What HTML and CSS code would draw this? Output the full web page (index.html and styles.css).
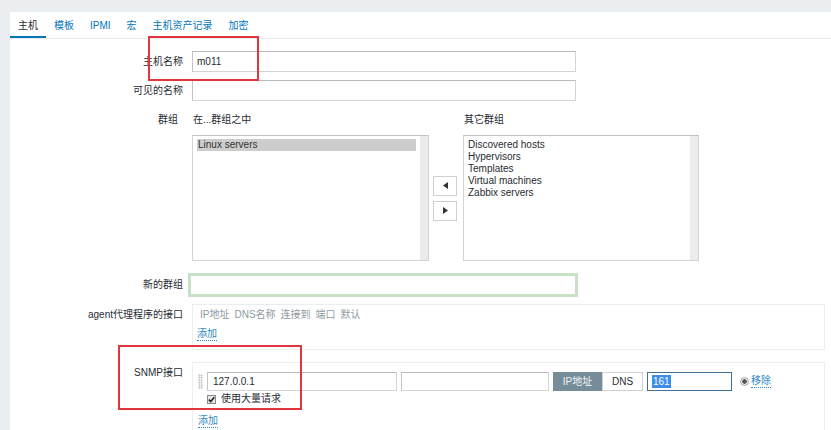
FILE: index.html
```html
<!DOCTYPE html>
<html>
<head>
<title>主机</title>
<meta charset="UTF-8">
<link rel="stylesheet" href="styles.css">
</head>
<body>

<div class="page">
  <div class="panel">
    <ul class="tabs">
      <li class="active"><a href="#">主机</a></li>
      <li><a href="#">模板</a></li>
      <li><a href="#">IPMI</a></li>
      <li><a href="#">宏</a></li>
      <li><a href="#">主机资产记录</a></li>
      <li><a href="#">加密</a></li>
    </ul>

    <div class="form">
      <div class="row row-host">
        <div class="lbl">主机名称</div>
        <div><input class="text wide" type="text" value="m011"></div>
      </div>

      <div class="row row-visible">
        <div class="lbl">可见的名称</div>
        <div><input class="text wide" type="text" value=""></div>
      </div>

      <div class="row row-groups">
        <div class="lbl lbl-groups">群组</div>
        <div class="groups">
          <div class="group-col">
            <div class="group-head">在...群组之中</div>
            <div class="listbox">
              <div class="items">
                <div class="item selected">Linux servers</div>
              </div>
              <div class="track"></div>
            </div>
          </div>
          <div class="moves">
            <button class="move" title="添加"><svg width="5" height="7" viewBox="0 0 5 7"><polygon points="5,0 5,7 0,3.5" fill="#333"/></svg></button>
            <button class="move" title="移除"><svg width="5" height="7" viewBox="0 0 5 7"><polygon points="0,0 0,7 5,3.5" fill="#333"/></svg></button>
          </div>
          <div class="group-col">
            <div class="group-head">其它群组</div>
            <div class="listbox">
              <div class="items">
                <div class="item">Discovered hosts</div>
                <div class="item">Hypervisors</div>
                <div class="item">Templates</div>
                <div class="item">Virtual machines</div>
                <div class="item">Zabbix servers</div>
              </div>
              <div class="track"></div>
            </div>
          </div>
        </div>
      </div>

      <div class="row row-newgroup">
        <div class="lbl">新的群组</div>
        <div><input class="text newgroup" type="text" value=""></div>
      </div>

      <div class="row row-box row-agent">
        <div class="lbl">agent代理程序的接口</div>
        <div class="ifbox agent">
          <div class="if-head">
            <span>IP地址</span><span>DNS名称</span><span>连接到</span><span>端口</span><span>默认</span>
          </div>
          <a class="add" href="#">添加</a>
        </div>
      </div>

      <div class="row row-box row-snmp">
        <div class="lbl">SNMP接口</div>
        <div class="ifbox snmp">
          <div class="if-line">
            <span class="handle"></span>
            <input class="text ip" type="text" value="127.0.0.1">
            <input class="text dns" type="text" value="">
            <div class="seg">
              <span class="seg-btn on">IP地址</span><span class="seg-btn">DNS</span>
            </div>
            <div class="text port"><span class="sel">161</span></div>
            <span class="radio"></span>
            <a class="remove" href="#">移除</a>
          </div>
          <div class="bulk">
            <span class="check"><svg width="7" height="7" viewBox="0 0 7 7"><path d="M0.8 3.6 L2.7 5.6 L6.3 1.2" stroke="#222" stroke-width="1.6" fill="none"/></svg></span>
            <span>使用大量请求</span>
          </div>
          <a class="add" href="#">添加</a>
        </div>
      </div>
    </div>
  </div>
</div>

<div class="mark mark-host"></div>
<div class="mark mark-snmp"></div>

</body>
</html>
```

FILE: styles.css
```css
* {
  box-sizing: border-box;
}
html, body {
  margin: 0;
  height: 100%;
}
body {
  background: #ebeef0;
  font-family: "Liberation Sans", Arial, "Noto Sans CJK SC", sans-serif;
  font-size: 10px;
  color: #1f2c33;
  overflow: hidden;
  position: relative;
}
.page {
  padding: 12px 0 0 10px;
  height: 100%;
}
.panel {
  background: #fff;
  height: 100%;
}

/* tabs */
.tabs {
  display: flex;
  list-style: none;
  margin: 0;
  padding: 0;
  height: 27px;
  border-bottom: 1px solid #ebeef0;
}
.tabs a {
  display: block;
  height: 26px;
  padding: 3px 8px 0;
  line-height: 21px;
  color: #0275b8;
  text-decoration: none;
  border-bottom: 2px solid transparent;
}
.tabs .active a {
  color: #1f2c33;
  border-bottom-color: #0275b8;
}

/* form rows */
.row {
  display: grid;
  grid-template-columns: 173px 1fr;
  column-gap: 9px;
  align-items: center;
}
.lbl {
  text-align: right;
  line-height: 12px;
}
.row-host {
  margin-top: 12px;
}
.row-visible {
  margin-top: 8px;
}
.row-groups {
  margin-top: 11px;
  align-items: start;
}
.row-newgroup {
  margin-top: 12px;
}
.row-agent {
  margin-top: 7px;
}
.row-snmp {
  margin-top: 12px;
}
.row-box {
  align-items: start;
}
.row-box .lbl {
  padding-top: 5px;
}
.lbl-groups {
  line-height: 15px;
  padding-right: 5px;
}

.text {
  display: block;
  height: 21px;
  margin: 0;
  padding: 0 4px;
  font: inherit;
  color: #1f2c33;
  background: #fff;
  border: 1px solid #d4d4d4;
  border-top-color: #b9b9b9;
  border-left-color: #c4c4c4;
  outline: 0;
}
.wide {
  width: 384px;
}
.newgroup {
  width: 390px;
  height: 24px;
  margin-left: -4px;
  border: 3px solid #c8e2c8;
}

/* groups */
.groups {
  display: flex;
}
.group-head {
  line-height: 15px;
  padding-left: 1px;
}
.listbox {
  display: flex;
  width: 237px;
  height: 126px;
  margin-top: 8px;
  border: 1px solid #d4d4d4;
  border-top-color: #c2c2c2;
}
.group-col + .moves + .group-col .listbox {
  width: 236px;
}
.items {
  flex: 1;
  padding: 3px 4px 0;
}
.item {
  line-height: 12px;
  white-space: nowrap;
}
.item.selected {
  background: #cdcdcd;
  color: #333;
  padding-left: 1px;
}
.track {
  width: 8px;
  background: #ececec;
}
.moves {
  display: flex;
  flex-direction: column;
  justify-content: center;
  gap: 5px;
  margin: 23px 6px 0 4px;
}
.move {
  width: 24px;
  height: 20px;
  padding: 0;
  display: flex;
  align-items: center;
  justify-content: center;
  background: #fff;
  border: 1px solid #d0d0d0;
  cursor: pointer;
}

/* interface boxes */
.ifbox {
  margin-right: 6px;
  border: 1px solid #ebeef0;
}
.agent {
  height: 46px;
  padding: 4px 4px 0;
}
.if-head {
  display: flex;
  gap: 5px;
  padding-left: 3px;
  line-height: 12px;
  color: #8d9aa2;
}
.add {
  display: inline-block;
  line-height: 12px;
  color: #2e88c4;
  text-decoration: none;
  border-bottom: 1px dotted #2e88c4;
}
.agent .add {
  margin-top: 7px;
}
.snmp {
  height: 80px;
  padding: 9px 0 0 5px;
}
.if-line {
  display: flex;
  align-items: center;
  height: 19px;
}
.handle {
  width: 5px;
  height: 15px;
  margin-right: 4px;
  background-image: radial-gradient(circle, #c4c4c4 0.8px, transparent 1px);
  background-size: 2.5px 2.5px;
}
.if-line .text {
  height: 19px;
}
.ip {
  width: 190px;
  padding-left: 5px;
}
.dns {
  width: 148px;
  margin-left: 4px;
}
.seg {
  display: flex;
  margin-left: 4px;
}
.seg-btn {
  height: 19px;
  line-height: 17px;
  text-align: center;
  border: 1px solid #d0d0d0;
  background: #fff;
}
.seg-btn.on {
  width: 49px;
  background: #768d99;
  border-color: #768d99;
  color: #f2f4f5;
}
.seg-btn + .seg-btn {
  width: 41px;
}
.port {
  width: 85px;
  margin-left: 4px;
  line-height: 17px;
  border: 1px solid #3f6f99;
}
.sel {
  display: inline-block;
  padding: 0 1px;
  line-height: 13px;
  background: #3d8ee8;
  color: #fff;
}
.radio {
  width: 9px;
  height: 9px;
  margin-left: 8px;
  border-radius: 50%;
  border: 1px solid #a9a9a9;
  background: radial-gradient(circle, #555 2px, #eaeaea 2.5px);
}
.remove {
  margin-left: 2px;
  line-height: 12px;
  color: #2e88c4;
  text-decoration: none;
  border-bottom: 1px dotted #2e88c4;
}
.bulk {
  display: flex;
  align-items: center;
  gap: 5px;
  margin-top: 2px;
  padding-left: 9px;
  line-height: 12px;
}
.check {
  width: 9px;
  height: 9px;
  display: flex;
  align-items: center;
  justify-content: center;
  border: 1px solid #8a8a8a;
  background: #e6e6e6;
}
.snmp .add {
  margin-top: 10px;
}

/* red highlight marks */
.mark {
  position: absolute;
  border: 2px solid #e2363f;
}
.mark-host {
  left: 148px;
  top: 36px;
  width: 111px;
  height: 45px;
}
.mark-snmp {
  left: 118px;
  top: 345px;
  width: 184px;
  height: 65px;
}
```
